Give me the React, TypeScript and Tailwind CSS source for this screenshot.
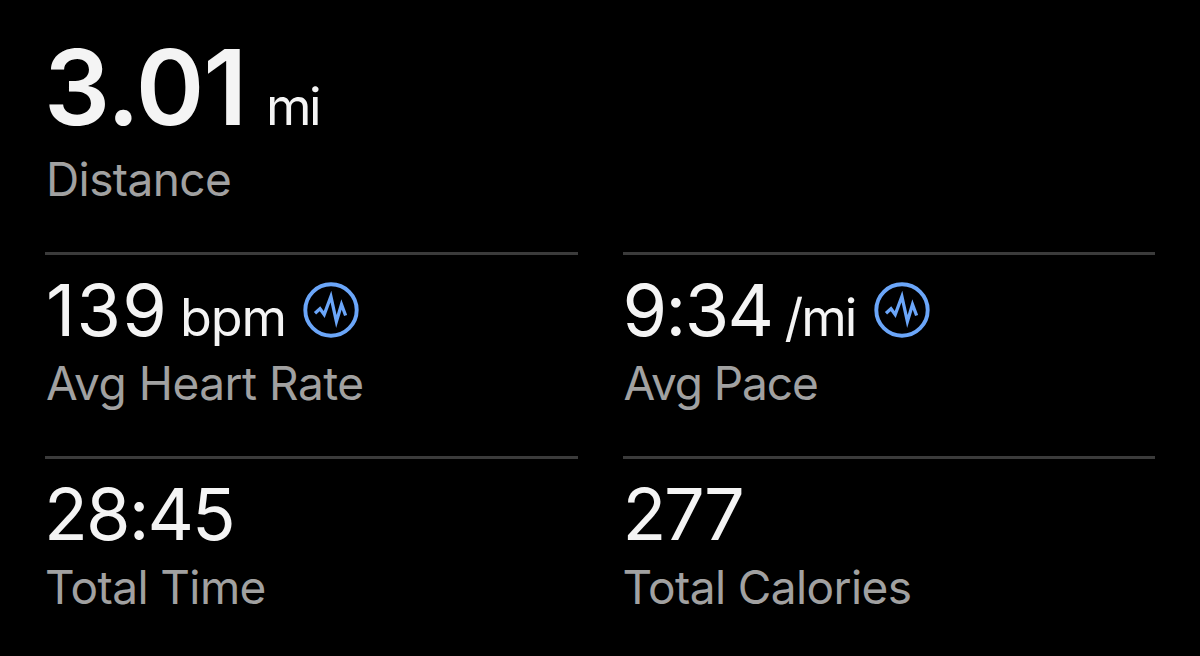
type StatProps = {
    value: string
    label: string
    unit?: string
    valueClass: string
    labelClass: string
    unitClass?: string
    iconClass?: string
}

const PulseIcon = ({ className }: { className?: string }) => {
    return (
        <svg className={`w-14 h-14 shrink-0 ${className}`} viewBox="0 0 56 56" fill="none" stroke="#6ba6f9">
            <circle cx="28" cy="28" r="25.7" strokeWidth="3.9" />
            <path d="M12 31.2L17 26.8L21.2 32.5L27.9 14.5L33.4 39.5L38.5 22.5L42.6 33.5" strokeWidth="3.3" strokeMiterlimit="10" />
        </svg>
    )
}

const Stat = ({ value, label, unit, valueClass, labelClass, unitClass, iconClass }: StatProps) => {
    return (
        <div className="h-[204px] border-t-[3px] border-[#3b3b3b] pt-[19px]">
            <div className="flex flex-row h-[72px]">
                <div className="flex flex-row items-baseline">
                    <h3 className={`text-[72px] leading-[72px] ${valueClass}`}>{value}</h3>
                    {unit && <span className={`text-[52px] leading-[52px] ${unitClass}`}>{unit}</span>}
                </div>
                {unit && <PulseIcon className={iconClass} />}
            </div>
            <h4 className={`mt-[9px] text-[46px] leading-[56px] text-[#a1a1a1] ${labelClass}`}>{label}</h4>
        </div>
    )
}

const App = () => {
    return (
        <div className="w-[1200px] h-[656px] bg-black px-[45px] font-['Inter',sans-serif] text-[#f4f4f4] whitespace-nowrap overflow-hidden">
            <div className="h-[252px] pt-[35px]">
                <div className="flex flex-row items-baseline h-[104px]">
                    <h2 className="-ml-[1px] text-[104px] leading-[104px] font-semibold tracking-[-1.2px]">3.01</h2>
                    <span className="ml-[20px] text-[52px] leading-[52px] tracking-[-2.6px]">mi</span>
                </div>
                <h4 className="mt-[12px] pl-[1px] text-[46px] leading-[56px] tracking-[-0.6px] text-[#a1a1a1]">Distance</h4>
            </div>
            <div className="grid grid-cols-2 gap-x-[45px]">
                <Stat value="139" label="Avg Heart Rate" unit="bpm" valueClass="tracking-[1.2px] pl-[1px]" labelClass="tracking-[-0.5px] pl-[1px]" unitClass="ml-[12px] tracking-[-1.1px]" iconClass="mt-[8px] ml-[17px]" />
                <Stat value="9:34" label="Avg Pace" unit="/mi" valueClass="tracking-[-1.6px]" labelClass="tracking-[-1.1px] pl-[1px]" unitClass="ml-[12px] tracking-[-2px]" iconClass="mt-[8px] ml-[19px]" />
                <Stat value="28:45" label="Total Time" valueClass="tracking-[-1.9px] -ml-[1px]" labelClass="tracking-[-0.6px]" />
                <Stat value="277" label="Total Calories" valueClass="tracking-[-2.3px]" labelClass="tracking-[-0.6px]" />
            </div>
        </div>
    )
}

export default App;
